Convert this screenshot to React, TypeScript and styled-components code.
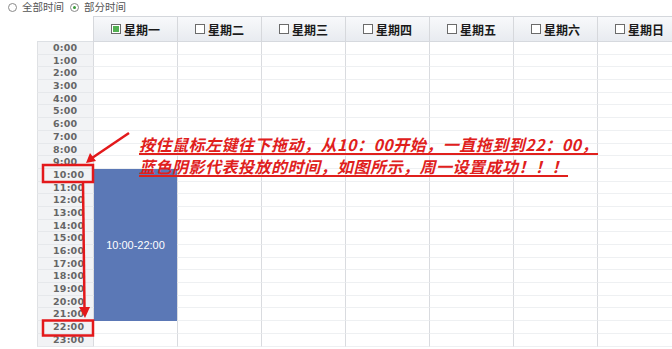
import React from "react";
import styled, { createGlobalStyle } from "styled-components";

const GlobalStyle = createGlobalStyle`
  html, body { margin: 0; padding: 0; background: #fff; overflow: hidden; }
  body { font-family: "Noto Sans CJK SC", "Liberation Sans", sans-serif; }
`;

const ROW_H = 12.7;
const days = ["星期一", "星期二", "星期三", "星期四", "星期五", "星期六", "星期日"];

const Page = styled.div`
  position: relative;
  width: 672px;
  height: 349px;
  overflow: hidden;
`;

const RadioBar = styled.div`
  display: flex;
  align-items: center;
  height: 14px;
  padding: 0 0 0 8px;
  gap: 6px;
  font-size: 10.5px;
  color: #555;
  line-height: 14px;
`;

const RadioItem = styled.label`
  display: flex;
  align-items: center;
  gap: 5px;
`;

const RadioDot = styled.span<{ $on?: boolean }>`
  width: 9px;
  height: 9px;
  border-radius: 50%;
  border: 1px solid #8a8a8a;
  background: #fff;
  position: relative;
  box-sizing: border-box;
  &::after {
    content: "";
    display: ${(p) => (p.$on ? "block" : "none")};
    position: absolute;
    left: 2px;
    top: 2px;
    width: 3px;
    height: 3px;
    border-radius: 50%;
    background: #3b9a3b;
  }
`;

const Grid = styled.div`
  margin: 2px 0 0 37px;
  display: grid;
  grid-template-columns: 56px repeat(7, 84px);
  grid-template-rows: 26px repeat(24, ${ROW_H}px);
  width: 644px;
`;

const Corner = styled.div`
  grid-column: 1;
  grid-row: 1;
  border-bottom: 1px solid #dde0e4;
  margin-top: 24px;
`;

const HeadCell = styled.div`
  grid-row: 1;
  display: flex;
  align-items: center;
  justify-content: center;
  gap: 3px;
  background: linear-gradient(#f8f9fb, #e8ebf0);
  border-top: 1px solid #d4d7dc;
  border-left: 1px solid #d6d8dc;
  border-bottom: 1px solid #d6d9de;
  box-sizing: border-box;
  font-size: 12px;
  font-weight: 700;
  color: #1a1a1a;
`;

const Check = styled.span<{ $on?: boolean }>`
  width: 10px;
  height: 10px;
  box-sizing: border-box;
  border: 1px solid #6b6b6b;
  background: #fff;
  padding: 1px;
  display: inline-flex;
  &::after {
    content: "";
    flex: 1;
    background: ${(p) => (p.$on ? "#52b052" : "transparent")};
  }
`;

const TimeCell = styled.div`
  grid-column: 1;
  background: #f2f3f5;
  border-left: 1px solid #dfe1e4;
  border-bottom: 1px solid #e6e8eb;
  box-sizing: border-box;
  padding-left: 15px;
  font-family: "DejaVu Sans", sans-serif;
  font-weight: 700;
  font-size: 9.5px;
  line-height: ${ROW_H}px;
  color: #666;
  letter-spacing: 0.2px;
  overflow: hidden;
  white-space: nowrap;
`;

const DayCell = styled.div`
  border-left: 1px solid #d9dbdf;
  border-bottom: 1px solid #eef0f2;
  box-sizing: border-box;
`;

const Block = styled.div`
  grid-column: 2;
  grid-row: 12 / span 12;
  background: #5b78b6;
  color: #fff;
  font-family: "Liberation Sans", sans-serif;
  font-size: 11px;
  display: flex;
  align-items: center;
  justify-content: center;
  margin-left: 1px;
`;

const Note = styled.div`
  position: absolute;
  left: 139px;
  top: 133px;
  font-size: 16px;
  line-height: 22px;
  font-weight: 700;
  font-style: italic;
  color: #e0201c;
  text-decoration: underline;
  text-decoration-thickness: 1.5px;
  text-underline-offset: 2px;
  white-space: nowrap;
  letter-spacing: 0.5px;
`;

const Marks = styled.svg`
  position: absolute;
  left: 0;
  top: 0;
  pointer-events: none;
`;

export default function App() {
  return (
    <>
      <GlobalStyle />
      <Page>
        <RadioBar>
          <RadioItem>
            <RadioDot />
            全部时间
          </RadioItem>
          <RadioItem>
            <RadioDot $on />
            部分时间
          </RadioItem>
        </RadioBar>
        <Grid>
          <Corner />
          {days.map((d, i) => (
            <HeadCell key={d} style={{ gridColumn: i + 2 }}>
              <Check $on={i === 0} />
              {d}
            </HeadCell>
          ))}
          {Array.from({ length: 24 }).map((_, h) => (
            <React.Fragment key={h}>
              <TimeCell style={{ gridRow: h + 2 }}>{h}:00</TimeCell>
              {days.map((d, i) => (
                <DayCell key={d} style={{ gridRow: h + 2, gridColumn: i + 2 }} />
              ))}
            </React.Fragment>
          ))}
          <Block>10:00-22:00</Block>
        </Grid>
        <Note>
          按住鼠标左键往下拖动，从10：00开始，一直拖到到22：00，
          <br />
          蓝色阴影代表投放的时间，如图所示，周一设置成功！！！
        </Note>
        <Marks width="672" height="349" viewBox="0 0 672 349">
          <g stroke="#e3191b" fill="none" strokeWidth="2.5">
            <rect x="43" y="165" width="50" height="17" />
            <rect x="43" y="320.5" width="50" height="15" />
            <line x1="129" y1="133" x2="92" y2="158" />
            <line x1="83" y1="183" x2="84.5" y2="309" />
          </g>
          <g fill="#e3191b">
            <polygon points="86,163 90,153 96,161" />
            <polygon points="79,307 90,307 85,318" />
          </g>
        </Marks>
      </Page>
    </>
  );
}
